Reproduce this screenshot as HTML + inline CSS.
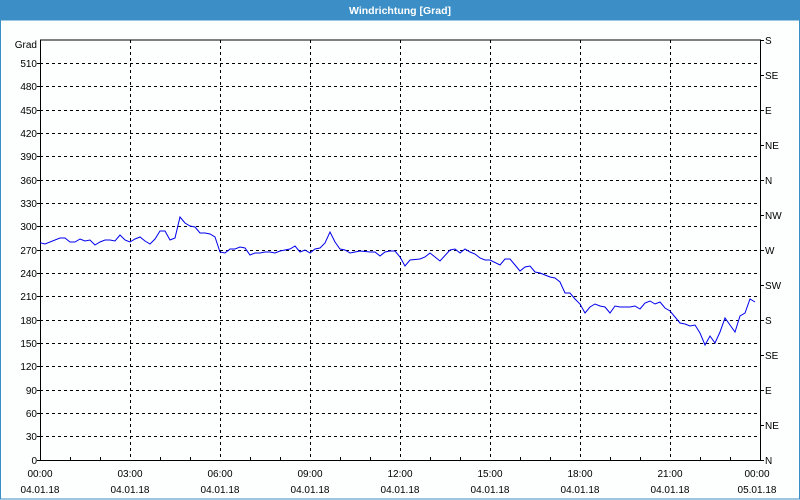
<!DOCTYPE html>
<html><head><meta charset="utf-8"><style>
html,body{margin:0;padding:0;width:800px;height:500px;overflow:hidden;background:#fff}
svg{display:block}
text{font-family:"Liberation Sans",sans-serif;font-size:10px;fill:#000}
</style></head><body>
<svg width="800" height="500" xmlns="http://www.w3.org/2000/svg">
<rect x="0" y="0" width="800" height="500" fill="#fdfefe"/>
<rect x="0" y="0" width="800" height="20" fill="#3c8fc6"/>
<rect x="0.5" y="20" width="799" height="479" fill="none" stroke="#3c8fc6" stroke-width="1"/>
<text x="400" y="14" text-anchor="middle" style="font-weight:bold;fill:#fff;font-size:10.5px">Windrichtung [Grad]</text>
<g stroke="#000" stroke-width="1" stroke-dasharray="3,3" fill="none">
<path d="M40 63.5H760M40 86.5H760M40 110.5H760M40 133.5H760M40 156.5H760M40 180.5H760M40 203.5H760M40 226.5H760M40 250.5H760M40 273.5H760M40 296.5H760M40 320.5H760M40 343.5H760M40 366.5H760M40 390.5H760M40 413.5H760M40 436.5H760"/>
<path d="M130.5 40V460M220.5 40V460M310.5 40V460M400.5 40V460M490.5 40V460M580.5 40V460M670.5 40V460"/>
</g>
<g stroke="#000" stroke-width="1" fill="none">
<path d="M40.5 40V460.5H760.5V40H40"/>
<path d="M37 63.5H40M37 86.5H40M37 110.5H40M37 133.5H40M37 156.5H40M37 180.5H40M37 203.5H40M37 226.5H40M37 250.5H40M37 273.5H40M37 296.5H40M37 320.5H40M37 343.5H40M37 366.5H40M37 390.5H40M37 413.5H40M37 436.5H40M37 460.5H40"/>
<path d="M760 40.5H764M760 75.5H764M760 110.5H764M760 145.5H764M760 180.5H764M760 215.5H764M760 250.5H764M760 285.5H764M760 320.5H764M760 355.5H764M760 390.5H764M760 425.5H764M760 460.5H764"/>
<path d="M70.5 460V457M100.5 460V457M160.5 460V457M190.5 460V457M250.5 460V457M280.5 460V457M340.5 460V457M370.5 460V457M430.5 460V457M460.5 460V457M520.5 460V457M550.5 460V457M610.5 460V457M640.5 460V457M700.5 460V457M730.5 460V457M760.5 460V457"/>
</g>
<g text-anchor="end">
<text x="37" y="48">Grad</text>
<text x="37" y="67">510</text><text x="37" y="90">480</text><text x="37" y="114">450</text><text x="37" y="137">420</text><text x="37" y="160">390</text><text x="37" y="184">360</text><text x="37" y="207">330</text><text x="37" y="230">300</text><text x="37" y="254">270</text><text x="37" y="277">240</text><text x="37" y="300">210</text><text x="37" y="324">180</text><text x="37" y="347">150</text><text x="37" y="370">120</text><text x="37" y="394">90</text><text x="37" y="417">60</text><text x="37" y="440">30</text><text x="37" y="464">0</text>
</g>
<g>
<text x="765" y="44">S</text><text x="765" y="79">SE</text><text x="765" y="114">E</text><text x="765" y="149">NE</text><text x="765" y="184">N</text><text x="765" y="219">NW</text><text x="765" y="254">W</text><text x="765" y="289">SW</text><text x="765" y="324">S</text><text x="765" y="359">SE</text><text x="765" y="394">E</text><text x="765" y="429">NE</text><text x="765" y="464">N</text>
</g>
<g text-anchor="middle">
<text x="40" y="477">00:00</text><text x="130" y="477">03:00</text><text x="220" y="477">06:00</text><text x="310" y="477">09:00</text><text x="400" y="477">12:00</text><text x="490" y="477">15:00</text><text x="580" y="477">18:00</text><text x="670" y="477">21:00</text><text x="757" y="477">00:00</text>
<text x="40" y="493">04.01.18</text><text x="130" y="493">04.01.18</text><text x="220" y="493">04.01.18</text><text x="310" y="493">04.01.18</text><text x="400" y="493">04.01.18</text><text x="490" y="493">04.01.18</text><text x="580" y="493">04.01.18</text><text x="670" y="493">04.01.18</text><text x="757" y="493">05.01.18</text>
</g>
<polyline fill="none" stroke="#0000ee" stroke-width="1" points="40,242.7 45,244 60,238 65,238 70,242 75,242 80,239 85,241 90,240 95,245 100,242 105,240 110,240 115,241 120,235 125,240 130,242 135,239 140,237 145,241 150,244 155,239 160,231 165,231 170,240 175,238 180,217 185,223 190,226 195,227 200,233 205,233 210,234 215,237 220,252 225,253 230,249 235,249 240,247 245,248 250,255 255,253 260,253 265,252 270,252 275,253 280,251 285,250 290,249 295,246 300,252 305,250 310,253 315,249 320,248 325,243 330,232 335,242 340,249 345,250 350,253 355,252 360,251 370,252 375,252 380,256 385,252 390,251 395,251 400,257 405,266 410,260 420,259 425,257 430,253 440,261 450,250 455,249 460,253 465,249 470,252 475,254 480,258 485,260 490,260 500,265 505,259 510,259 515,265 520,271 525,267 530,266 535,272 540,273 545,275 550,277 555,278 560,282 565,293 570,293 575,299 580,304 585,313 590,307 595,304 600,306 605,307 610,313 615,306 620,307 625,307 630,307 635,306 640,309 645,303 650,301 655,304 660,302 665,308 670,311 675,317 680,323 685,324 690,326 695,325 700,333 705,345 710,336 715,343 720,332 725,318 730,325 735,332 740,316 745,313 750,299 755,302"/>
</svg>
</body></html>
